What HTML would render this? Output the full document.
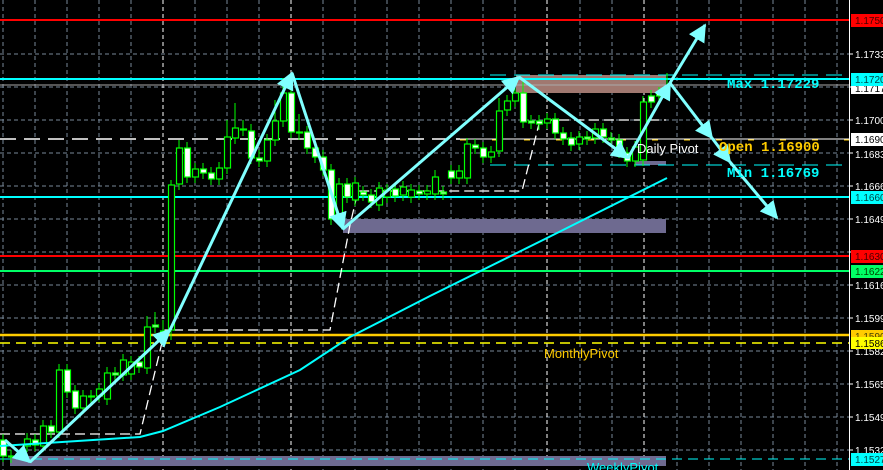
<!DOCTYPE html>
<html><head><meta charset="utf-8"><style>
html,body{margin:0;padding:0;background:#000;width:883px;height:470px;overflow:hidden}
svg{display:block}
.t{font-family:"Liberation Sans",sans-serif;font-size:10px}
.m{font-family:"Liberation Mono",monospace;font-size:14px;font-weight:bold}
</style></head><body>
<svg width="883" height="470" viewBox="0 0 883 470" xmlns="http://www.w3.org/2000/svg">
<rect width="883" height="470" fill="#000"/>
<g stroke="#778899" stroke-width="1" stroke-dasharray="4,3">
<path d="M0 54H849M0 87H849M0 120H849M0 153H849M0 186H849M0 219H849M0 252H849M0 285H849M0 318H849M0 351H849M0 384H849M0 417H849M0 450H849"/>
<path d="M3 0V470M35 0V470M67 0V470M99 0V470M131 0V470M195 0V470M227 0V470M259 0V470M323 0V470M355 0V470M387 0V470M419 0V470M451 0V470M483 0V470M515 0V470M580 0V470M612 0V470M677 0V470M709 0V470M741 0V470M773 0V470M805 0V470M837 0V470"/>
</g>
<g stroke="#fff" stroke-width="1" stroke-dasharray="4,3">
<path d="M163 0V470M291 0V470M547 0V470M644 0V470"/>
</g>
<rect x="516" y="75" width="150" height="18" fill="#a07870"/>
<rect x="343" y="219" width="323" height="14" fill="#6e6a90"/>
<rect x="635" y="161" width="31" height="4" fill="#6e6a90"/>
<rect x="10" y="456" width="656" height="10" fill="#6e6a90"/>
<path d="M0 20H849" stroke="#ff0000" stroke-width="2"/>
<path d="M0 79H849" stroke="#00ffff" stroke-width="2"/>
<path d="M0 85H849" stroke="#aaaaaa" stroke-width="1"/>
<path d="M490 75H849" stroke="#00ffff" stroke-width="1" stroke-dasharray="16,8"/>
<path d="M0 139H460" stroke="#fff" stroke-width="1.5" stroke-dasharray="16,8"/>
<path d="M460 139H849" stroke="#fff" stroke-width="1"/>
<path d="M460 140H849" stroke="#ffcc00" stroke-width="1" stroke-dasharray="6,26"/>
<path d="M490 165H849" stroke="#00ffff" stroke-width="1" stroke-dasharray="16,8"/>
<path d="M0 197H849" stroke="#00ffff" stroke-width="2"/>
<path d="M0 256H849" stroke="#ff0000" stroke-width="2"/>
<path d="M0 271H849" stroke="#00ff66" stroke-width="2"/>
<path d="M0 335H849" stroke="#ffcc00" stroke-width="2.5"/>
<path d="M0 343H849" stroke="#ffff00" stroke-width="1.5" stroke-dasharray="10,6"/>
<path d="M0 459H849" stroke="#00ffff" stroke-width="1" stroke-dasharray="10,6"/>
<g stroke="#fff" stroke-width="1.3" stroke-dasharray="10,5" fill="none">
<path d="M0 434H140L165 330H330L350 225L358 191H522L540 120H666"/>
</g>
<g stroke="#00ff00" stroke-width="1">
<path d="M3 434V462M11 450V463M27 433V452M35 434V451M43 420V452M51 420V438M59 364V438M67 364V398M75 385V414M83 390V414M91 390V403M99 383V402M107 367V405M115 367V381M123 354V381M131 356V380M139 356V373M147 316V374M155 312V333M163 320V338M171 180V340M179 140V190M187 142V183M195 163V183M203 163V179M211 167V185M219 162V185M227 120V174M235 103V144M243 120V136M251 124V164M259 150V167M267 134V167M275 100V146M283 78V127M291 73V138M299 114V140M307 126V154M315 142V163M323 150V176M331 164V225M339 178V225M347 178V203M355 177V206M363 186V201M371 189V208M379 182V211M387 184V203M395 183V202M403 181V201M411 184V203M419 185V200M427 185V200M435 170V200M443 186V200M451 165V184M459 165V184M467 138V184M475 139V154M483 142V163M491 146V163M499 98V157M507 95V116M515 87V107M523 80V128M531 115V129M539 115V130M547 113V129M555 113V139M563 127V145M571 132V151M579 131V150M587 131V145M595 123V144M603 123V143M611 132V146M619 134V158M627 147V167M635 141V167M643 96V166M651 90V108M659 87V102M667 73V93"/>
</g>
<g stroke="#00ff00" stroke-width="1.2">
<rect x="0.5" y="440" width="6" height="16" fill="#fff"/>
<rect x="8.5" y="456" width="6" height="1" fill="#fff"/>
<rect x="24.5" y="439" width="6" height="7" fill="#000"/>
<rect x="32.5" y="440" width="6" height="5" fill="#fff"/>
<rect x="40.5" y="426" width="6" height="20" fill="#000"/>
<rect x="48.5" y="426" width="6" height="6" fill="#fff"/>
<rect x="56.5" y="370" width="6" height="62" fill="#000"/>
<rect x="64.5" y="370" width="6" height="22" fill="#fff"/>
<rect x="72.5" y="391" width="6" height="17" fill="#fff"/>
<rect x="80.5" y="396" width="6" height="12" fill="#000"/>
<rect x="88.5" y="396" width="6" height="1" fill="#fff"/>
<rect x="96.5" y="389" width="6" height="7" fill="#000"/>
<rect x="104.5" y="373" width="6" height="26" fill="#000"/>
<rect x="112.5" y="373" width="6" height="2" fill="#fff"/>
<rect x="120.5" y="360" width="6" height="15" fill="#000"/>
<rect x="128.5" y="362" width="6" height="12" fill="#000"/>
<rect x="136.5" y="362" width="6" height="5" fill="#fff"/>
<rect x="144.5" y="327" width="6" height="41" fill="#000"/>
<rect x="152.5" y="325" width="6" height="2" fill="#fff"/>
<rect x="160.5" y="331" width="6" height="1" fill="#fff"/>
<rect x="168.5" y="185" width="6" height="145" fill="#000"/>
<rect x="176.5" y="148" width="6" height="36" fill="#000"/>
<rect x="184.5" y="148" width="6" height="29" fill="#fff"/>
<rect x="192.5" y="169" width="6" height="8" fill="#000"/>
<rect x="200.5" y="169" width="6" height="4" fill="#fff"/>
<rect x="208.5" y="173" width="6" height="6" fill="#fff"/>
<rect x="216.5" y="168" width="6" height="11" fill="#000"/>
<rect x="224.5" y="137" width="6" height="31" fill="#000"/>
<rect x="232.5" y="128" width="6" height="10" fill="#000"/>
<rect x="240.5" y="129" width="6" height="1" fill="#fff"/>
<rect x="248.5" y="131" width="6" height="27" fill="#fff"/>
<rect x="256.5" y="158" width="6" height="3" fill="#fff"/>
<rect x="264.5" y="140" width="6" height="21" fill="#000"/>
<rect x="272.5" y="121" width="6" height="19" fill="#000"/>
<rect x="280.5" y="93" width="6" height="28" fill="#000"/>
<rect x="288.5" y="93" width="6" height="39" fill="#fff"/>
<rect x="296.5" y="132" width="6" height="1" fill="#fff"/>
<rect x="304.5" y="132" width="6" height="16" fill="#fff"/>
<rect x="312.5" y="148" width="6" height="9" fill="#fff"/>
<rect x="320.5" y="157" width="6" height="13" fill="#fff"/>
<rect x="328.5" y="170" width="6" height="49" fill="#fff"/>
<rect x="336.5" y="184" width="6" height="35" fill="#000"/>
<rect x="344.5" y="184" width="6" height="13" fill="#fff"/>
<rect x="352.5" y="183" width="6" height="17" fill="#000"/>
<rect x="360.5" y="192" width="6" height="3" fill="#fff"/>
<rect x="368.5" y="195" width="6" height="7" fill="#fff"/>
<rect x="376.5" y="188" width="6" height="17" fill="#000"/>
<rect x="384.5" y="190" width="6" height="7" fill="#000"/>
<rect x="392.5" y="189" width="6" height="7" fill="#fff"/>
<rect x="400.5" y="187" width="6" height="8" fill="#000"/>
<rect x="408.5" y="190" width="6" height="7" fill="#000"/>
<rect x="416.5" y="191" width="6" height="3" fill="#fff"/>
<rect x="424.5" y="191" width="6" height="3" fill="#000"/>
<rect x="432.5" y="177" width="6" height="17" fill="#000"/>
<rect x="440.5" y="192" width="6" height="2" fill="#fff"/>
<rect x="448.5" y="171" width="6" height="7" fill="#fff"/>
<rect x="456.5" y="171" width="6" height="7" fill="#000"/>
<rect x="464.5" y="144" width="6" height="34" fill="#000"/>
<rect x="472.5" y="145" width="6" height="3" fill="#fff"/>
<rect x="480.5" y="148" width="6" height="9" fill="#fff"/>
<rect x="488.5" y="152" width="6" height="5" fill="#000"/>
<rect x="496.5" y="111" width="6" height="40" fill="#000"/>
<rect x="504.5" y="101" width="6" height="9" fill="#000"/>
<rect x="512.5" y="93" width="6" height="8" fill="#000"/>
<rect x="520.5" y="93" width="6" height="29" fill="#fff"/>
<rect x="528.5" y="121" width="6" height="2" fill="#fff"/>
<rect x="536.5" y="121" width="6" height="3" fill="#fff"/>
<rect x="544.5" y="119" width="6" height="4" fill="#000"/>
<rect x="552.5" y="119" width="6" height="14" fill="#fff"/>
<rect x="560.5" y="133" width="6" height="6" fill="#fff"/>
<rect x="568.5" y="138" width="6" height="7" fill="#fff"/>
<rect x="576.5" y="137" width="6" height="7" fill="#000"/>
<rect x="584.5" y="137" width="6" height="2" fill="#fff"/>
<rect x="592.5" y="129" width="6" height="9" fill="#000"/>
<rect x="600.5" y="129" width="6" height="8" fill="#fff"/>
<rect x="608.5" y="138" width="6" height="2" fill="#fff"/>
<rect x="616.5" y="140" width="6" height="12" fill="#fff"/>
<rect x="624.5" y="153" width="6" height="8" fill="#fff"/>
<rect x="632.5" y="147" width="6" height="14" fill="#000"/>
<rect x="640.5" y="102" width="6" height="58" fill="#000"/>
<rect x="648.5" y="96" width="6" height="6" fill="#fff"/>
<rect x="656.5" y="93" width="6" height="3" fill="#fff"/>
</g>
<polyline points="0,446 140,437 163,431 220,407 300,370 350,337 430,296 547,238 667,178" fill="none" stroke="#00ffff" stroke-width="2"/>
<defs>
<marker id="a" viewBox="0 0 10 10" refX="9" refY="5" markerWidth="6" markerHeight="6" orient="auto-start-reverse">
<path d="M0 0L10 5L0 10z" fill="#80ffff"/>
</marker>
</defs>
<g stroke="#80ffff" stroke-width="3" fill="none" marker-end="url(#a)">
<path d="M5 440L30 462"/>
<path d="M30 462L170 330"/>
<path d="M170 330L292 73"/>
<path d="M292 73L343 229"/>
<path d="M343 229L519 77"/>
<path d="M519 77L628 158"/>
<path d="M628 158L670 83"/>
<path d="M670 83L705 25"/>
<path d="M670 83L712 138"/>
<path d="M712 138L730 162"/>
<path d="M730 162L777 218"/>
</g>
<text x="727" y="88" class="m" fill="#00ffff">Max 1.17229</text>
<text x="719" y="151" class="m" fill="#ffcc00">Open 1.16900</text>
<text x="727" y="177" class="m" fill="#00ffff">Min 1.16769</text>
<text x="637" y="153" font-family="Liberation Sans,sans-serif" font-size="13" fill="#fff">Daily Pivot</text>
<text x="544" y="358" font-family="Liberation Sans,sans-serif" font-size="13" fill="#ffcc00">MonthlyPivot</text>
<text x="587" y="472" font-family="Liberation Sans,sans-serif" font-size="13" fill="#00ffff">WeeklyPivot</text>
<rect x="850" y="0" width="33" height="470" fill="#000"/>
<path d="M849.5 0V470" stroke="#fff" stroke-width="1"/>
<g stroke="#fff"><path d="M849 54H853M849 87H853M849 120H853M849 153H853M849 186H853M849 219H853M849 252H853M849 285H853M849 318H853M849 351H853M849 384H853M849 417H853M849 450H853"/></g>
<g class="t" fill="#fff">
<text x="855" y="58">1.1733</text>
<text x="855" y="124">1.1700</text>
<text x="855" y="158">1.1683</text>
<text x="855" y="190">1.1666</text>
<text x="855" y="223">1.1649</text>
<text x="855" y="289">1.1616</text>
<text x="855" y="322">1.1599</text>
<text x="855" y="355">1.1582</text>
<text x="855" y="388">1.1565</text>
<text x="855" y="421">1.1549</text>
<text x="855" y="454">1.1532</text>
</g>
<rect x="851" y="86" width="32" height="8" fill="#fff"/><text x="855" y="92" class="t" fill="#000">1.1717</text>
<rect x="851" y="14" width="32" height="13" fill="#ff0000"/><text x="855" y="24" class="t" fill="#400">1.1750</text>
<rect x="851" y="73" width="32" height="13" fill="#00ffff"/><text x="855" y="83" class="t" fill="#044">1.1720</text>
<rect x="851" y="133" width="32" height="13" fill="#fff"/><text x="855" y="143" class="t" fill="#000">1.1690</text>
<rect x="851" y="191" width="32" height="13" fill="#00ffff"/><text x="855" y="201" class="t" fill="#044">1.1660</text>
<rect x="851" y="250" width="32" height="13" fill="#ff0000"/><text x="855" y="260" class="t" fill="#400">1.1630</text>
<rect x="851" y="265" width="32" height="13" fill="#00ff66"/><text x="855" y="275" class="t" fill="#040">1.1622</text>
<rect x="851" y="330" width="32" height="12" fill="#ffcc00"/><text x="855" y="340" class="t" fill="#440">1.1590</text>
<rect x="851" y="337" width="32" height="12" fill="#ffff00"/><text x="855" y="347" class="t" fill="#000">1.1586</text>
<rect x="851" y="453" width="32" height="13" fill="#00ffff"/><text x="855" y="463" class="t" fill="#044">1.1527</text>
</svg>
</body></html>
